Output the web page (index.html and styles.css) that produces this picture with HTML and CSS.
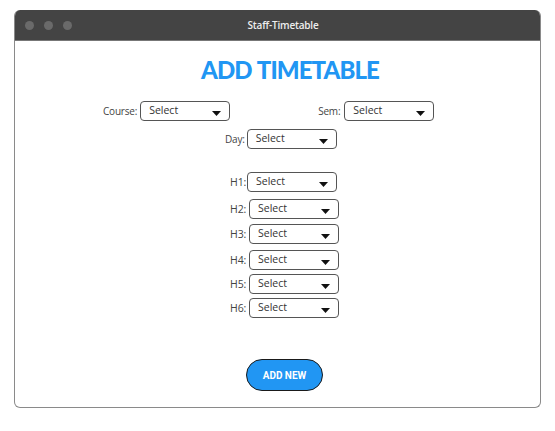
FILE: index.html
```html
<!DOCTYPE html>
<html>
<head>
<meta charset="utf-8">
<link rel="stylesheet" href="styles.css">
</head>
<body>
<div class="window">
  <div class="titlebar">
    <div class="dots"><span class="dot"></span><span class="dot"></span><span class="dot"></span></div>
    <div class="wtitle">Staff-Timetable</div>
  </div>
  <div class="content">
    <h1 class="heading">ADD TIMETABLE</h1>
    <div class="row row-top">
      <div class="field course"><label>Course:</label><div class="sel"><span>Select</span><svg width="9" height="5" viewBox="0 0 9 5"><path d="M0 0H9L4.5 5Z" fill="#111"/></svg></div></div>
      <div class="field sem"><label>Sem:</label><div class="sel"><span>Select</span><svg width="9" height="5" viewBox="0 0 9 5"><path d="M0 0H9L4.5 5Z" fill="#111"/></svg></div></div>
    </div>
    <div class="row row-day">
      <div class="field"><label>Day:</label><div class="sel"><span>Select</span><svg width="9" height="5" viewBox="0 0 9 5"><path d="M0 0H9L4.5 5Z" fill="#111"/></svg></div></div>
    </div>
    <div class="hours">
      <div class="field h h1"><label>H1:</label><div class="sel"><span>Select</span><svg width="9" height="5" viewBox="0 0 9 5"><path d="M0 0H9L4.5 5Z" fill="#111"/></svg></div></div>
      <div class="field h h2"><label>H2:</label><div class="sel"><span>Select</span><svg width="9" height="5" viewBox="0 0 9 5"><path d="M0 0H9L4.5 5Z" fill="#111"/></svg></div></div>
      <div class="field h h3"><label>H3:</label><div class="sel"><span>Select</span><svg width="9" height="5" viewBox="0 0 9 5"><path d="M0 0H9L4.5 5Z" fill="#111"/></svg></div></div>
      <div class="field h h4"><label>H4:</label><div class="sel"><span>Select</span><svg width="9" height="5" viewBox="0 0 9 5"><path d="M0 0H9L4.5 5Z" fill="#111"/></svg></div></div>
      <div class="field h h5"><label>H5:</label><div class="sel"><span>Select</span><svg width="9" height="5" viewBox="0 0 9 5"><path d="M0 0H9L4.5 5Z" fill="#111"/></svg></div></div>
      <div class="field h h6"><label>H6:</label><div class="sel"><span>Select</span><svg width="9" height="5" viewBox="0 0 9 5"><path d="M0 0H9L4.5 5Z" fill="#111"/></svg></div></div>
    </div>
    <div class="actions"><button class="btn">ADD NEW</button></div>
  </div>
</div>
</body>
</html>
```
FILE: styles.css
```css
* { box-sizing: border-box; }
body {
  margin: 0;
  background: #fff;
  font-family: "Open Sans", "Liberation Sans", sans-serif;
}
.window {
  margin: 10px 0 0 14px;
  width: 527px;
  height: 398px;
  border: 1.5px solid #8a8a8a;
  border-top: none;
  border-radius: 6px;
  overflow: hidden;
  background: #fff;
}
.titlebar {
  height: 31px;
  background: #444444;
  border-bottom: 1px solid #777;
  display: flex;
  align-items: center;
  position: relative;
}
.dots {
  display: flex;
  gap: 10px;
  padding-left: 10px;
}
.dot {
  width: 9px;
  height: 9px;
  border-radius: 50%;
  background: #6a6a6a;
}
.wtitle {
  position: absolute;
  left: 11px;
  right: 0;
  text-align: center;
  color: #eee;
  font-size: 10px;
  font-weight: 600;
  letter-spacing: -0.2px;
}
.content {
  display: flex;
  flex-direction: column;
}
.heading {
  margin: 14px 0 0 0;
  text-align: center;
  color: #2196F3;
  font-family: "Lato", "Open Sans", sans-serif;
  font-weight: 900;
  font-size: 24px;
  line-height: 30px;
  letter-spacing: -0.9px;
  word-spacing: 1px;
  padding-left: 25px;
}
.row { display: flex; }
.row-top {
  margin-top: 16px;
  padding-left: 88px;
}
.row-top .sem { margin-left: 88px; }
.row-top .sem label { margin-right: 4px; }
.row-top .course label { margin-right: 3px; }
.row-day {
  margin-top: 8px;
  padding-left: 210px;
}
.row-day label { margin-right: 3px; }
.field {
  display: flex;
  align-items: center;
}
.field label {
  font-size: 10px;
  color: #444;
  margin-right: 2px;
  letter-spacing: -0.2px;
}
.sel {
  width: 90px;
  height: 20px;
  border: 1.5px solid #555;
  border-radius: 4px;
  display: flex;
  align-items: center;
  justify-content: space-between;
  padding: 0 8px 0 8px;
  font-size: 10.5px;
  color: #333;
}
.sel span { margin-top: -2px; }
.sel svg { margin-top: 4px; }
.hours {
  margin-top: 23px;
  display: flex;
  flex-direction: column;
  padding-left: 211px;
}
.h label { width: 20px; text-align: right; margin-right: 3px; font-size: 10.5px; }
.h2 { margin-top: 7px; }
.h3 { margin-top: 5px; }
.h4 { margin-top: 6px; }
.h5 { margin-top: 4px; }
.h6 { margin-top: 4px; }
.h1 .sel { margin-left: -2px; }
.actions {
  margin-top: 41px;
  display: flex;
  justify-content: center;
  padding-left: 14px;
}
.btn {
  width: 77px;
  height: 32px;
  border-radius: 16px;
  background: #2196F3;
  border: 1px solid #1a1a1a;
  color: #fff;
  font-family: "Roboto", "Open Sans", sans-serif;
  font-weight: 700;
  font-size: 10px;
  padding: 0;
}
```
